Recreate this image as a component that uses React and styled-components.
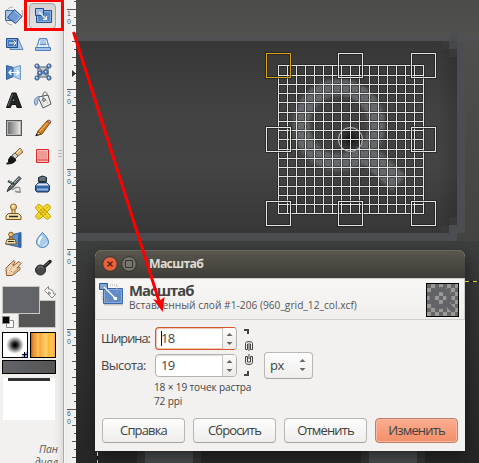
import React from 'react';
import styled, { createGlobalStyle, css } from 'styled-components';

const GlobalStyle = createGlobalStyle`
  * { box-sizing: border-box; }
  body { margin: 0; overflow: hidden; font-family: "Open Sans", "Noto Sans", sans-serif; color: #444; }
`;

const Screen = styled.div`
  position: relative;
  display: flex;
  width: 479px;
  height: 463px;
  overflow: hidden;
  background: #3a3a3a;
`;

/* ---------- toolbox ---------- */
const Toolbox = styled.aside`
  display: flex;
  flex-direction: column;
  flex: none;
  width: 65px;
  height: 463px;
  background: #f2f1f0;
  border-right: 1px solid #f6f5f4;
  box-shadow: inset -1px 0 #aaa9a6, inset -9px 0 9px -7px #cfcecb;
`;
const ToolGrid = styled.div`
  display: grid;
  flex: none;
  grid-template-columns: 29px 29px;
  grid-auto-rows: 28px;
  padding-top: 2px;
`;
const Tool = styled.div`
  display: flex;
  align-items: center;
  justify-content: center;
  width: 27px;
  height: 26px;
  margin: 1px 1px 1px 0;
  border: 1px solid ${(p) => (p.$active ? '#a6a5a2' : 'transparent')};
  border-radius: 4px;
  background: ${(p) => (p.$active ? 'linear-gradient(#d3d2d0, #e4e3e1)' : 'none')};
`;
const ColorArea = styled.div`
  display: grid;
  flex: none;
  grid-template-columns: 16px 22px 16px;
  grid-template-rows: 14px 14px 14px;
  width: 54px;
  margin: 4px 0 4px 2px;
`;
const Swatch = styled.div`
  border: 1px solid #c8c8c2;
  ${(p) => p.$front
    ? css`grid-area: 1 / 1 / 3 / 3; background: #626468; z-index: 1;`
    : css`grid-area: 2 / 2 / 4 / 4; background: #555;`}
`;
const SwapSlot = styled.div`
  grid-area: 1 / 3;
  padding-left: 4px;
`;
const DefaultsSlot = styled.div`
  grid-area: 3 / 1;
  padding-top: 2px;
`;
const PreviewRow = styled.div`
  display: flex;
  flex: none;
  gap: 2px;
  margin-left: 2px;
`;
const Preview = styled.div`
  width: 26px;
  height: 26px;
  border: 1px solid #000;
  background: ${(p) => p.$fill};
`;
const GradientPreview = styled.div`
  flex: none;
  width: 54px;
  height: 14px;
  margin: 2px 0 4px 2px;
  border: 1px solid #000;
  background: linear-gradient(90deg, #626468, #555);
`;
const ImagePreview = styled.div`
  flex: none;
  width: 52px;
  height: 42px;
  margin-left: 3px;
  padding: 0 5px;
  background: #fff;
`;
const ImageStrip = styled.div`
  height: 3px;
  background: #333;
`;
const DockHint = styled.div`
  flex: none;
  width: 58px;
  margin-top: 23px;
  text-align: right;
  font-size: 10.4px;
  line-height: 13px;
  font-style: italic;
  color: #555;
`;
const Art = styled.svg`
  display: block;
  flex: none;
  overflow: visible;
`;

const B = '#3a69a8';
const icons = {
  rotate: <>
    <path d="M1 5q2-5 7-5M17 3q2 4-1 8M1 14q2 4 6 4" fill="none" stroke="#a9a9a7" />
    <path d="M.5 3.500h10v10H.5z" fill="#a7c3e6" stroke={B} />
    <path d="M9.500 2.500l7.500 7-6.500 7-8-6z" fill="#6f9ad2" stroke="#244f8c" />
    <path d="M9.500 4l6 5.500-5 5.500" fill="none" stroke="#b9d0ed" />
  </>,
  scale: <>
    <path d="M2.500 3.500h15v12h-15z" fill="#5a89c8" stroke="#244f8c" />
    <path d="M3.500 4.500h13v10h-13z" fill="none" stroke="#91b3df" />
    <path d="M1.500 1.500h8v7h-8z" fill="#9fbee5" stroke="#244f8c" />
    <path d="M5 5l7 7m-3 .5h3.500V9" fill="none" stroke="#f4f8ff" strokeWidth="1.200" />
  </>,
  shear: <>
    <path d="M5 3.500h8l5 11H5z" fill="#a9c7ea" stroke="#5f86b8" />
    <path d="M1.500 3.500h11v9h-11z" fill="#4477bb" stroke="#244f8c" />
    <path d="M2.500 4.500h9v7h-9z" fill="none" stroke="#7fa6d7" />
    <path d="M4 8h7M8.500 5.500L11 8l-2.500 2.500" fill="none" stroke="#fff" />
  </>,
  perspective: <>
    <path d="M5.500 3.500h7l3.500 11H2z" fill="#e0edfc" stroke="#5f8fc8" />
    <path d="M5.500 3.500h7l1.500 6H4z" fill="#a9c8ec" stroke="#5888c1" />
    <path d="M6 5.500l-2 8M12 5.500l2 8" stroke="#fff" />
    <path d="M1.500 12.500h15v3h-15z" fill="#a3c1e6" stroke="#4f7fbd" />
  </>,
  flip: <>
    <path d="M1.500 2.500l7 2v9l-7 3z" fill="#4a7cbc" stroke="#2d609e" />
    <path d="M8.500 4.500l7-2v14l-7-3z" fill="#b4cfee" stroke="#6d99cb" />
    <path d="M4 9.500h9.500M6.500 7L4 9.500 6.500 12M11.500 7L14 9.500 11.500 12" fill="none" stroke="#fff" strokeWidth="1.200" />
  </>,
  cage: <>
    <path d="M4 4h10v10H4zM4 4l10 10M14 4L4 14" fill="#c7cdd4" stroke="#7d8997" strokeWidth="1.500" />
    {[[3, 3], [15, 3], [6, 10], [12, 9], [3, 15], [15, 15]].map(([x, y]) => <g key={`${x}-${y}`}>
      <circle cx={x} cy={y} r="2.100" fill="#7da3d3" stroke="#244f8c" /><circle cx={x - .5} cy={y - .5} r=".7" fill="#e5f0fd" />
    </g>)}
  </>,
  type: <>
    <path d="M1.500 16.500L7 2h4l5.500 14.500h-4.500l-1-3H6.500l-1 3zM7.500 10.500h2.500L8.800 6z" fill="#262827" stroke="#111" strokeLinejoin="round" />
    <path d="M3 15L7.500 3" stroke="#777" strokeWidth=".8" />
  </>,
  bucket: <>
    <path d="M4 6l10-2 3 9-8 4z" fill="#efefed" stroke="#555753" />
    <path d="M7 9l3 5M11 7l3 6" stroke="#c5c5c0" />
    <path d="M9 9V3q1.500-4 4-.5V5" fill="none" stroke="#666" />
    <circle cx="10" cy="9" r="1.300" fill="#fff" stroke="#555" />
    <path d="M6 5.500Q-.5 6 .5 12q1 5 3 0l.5-4z" fill="#a7c8ec" stroke="#6f8bad" />
  </>,
  pencil: <>
    <path d="M4 12L13 2l3 2-8 11-5 1.500z" fill="#d47d21" stroke="#85500d" />
    <path d="M5.500 12.500L13.500 4" stroke="#ffc477" /><path d="M2.500 16.500l1.200-4 3.300 2.500z" fill="#ead2a6" stroke="#6d4919" />
    <path d="M13 2l2-1 2 1.500-1 2z" fill="#e3928a" stroke="#805246" /><path d="M2 17l1-2" stroke="#111" strokeWidth="1.500" />
  </>,
  brush: <>
    <path d="M10 6l5-5 3 4-5 4z" fill="#e9bd86" stroke="#8b6236" /><path d="M12 6l3.500-3.500" stroke="#fff0cb" />
    <path d="M7 8l3-2 3 3-3 3z" fill="#d2d2d0" stroke="#5f605e" />
    <path d="M6 9l5 4q-2 4-9.500 4 3-2 2-4.500z" fill="#171918" stroke="#111" />
  </>,
  eraser: <>
    <path d="M2.500 2.500h12v13h-12z" fill="#ef9b97" stroke="#df2828" /><path d="M3.500 3.500h10v11h-10z" fill="none" stroke="#f6c1be" /><path d="M3 13h11" stroke="#e34a49" />
  </>,
  airbrush: <>
    <path d="M7 15q7-5 8-1t-5 2q2 2 6 1" fill="none" stroke="#999" strokeWidth="1.500" />
    <path d="M4 12L14 1.500l2 2-9 10-5 3z" fill="#626b6c" stroke="#303738" /><path d="M6 11l8-8" stroke="#b9c2c3" />
    <path d="M3 6l6 3" stroke="#343a3b" strokeWidth="2.500" /><path d="M4 6l4 2" stroke="#91999a" />
  </>,
  ink: <>
    <path d="M4.500 7.500h8l3 3v5l-1.500 1.500H3l-1.500-1.500v-5z" fill="#3465a4" stroke="#23364c" />
    <path d="M4 8.500h9l2 2H2z" fill="#dfe8f1" /><path d="M3 14.500h11" stroke="#8eb5e5" strokeWidth="2" />
    <path d="M4.500 2.500q4-3 8 0v4h-8z" fill="#49545c" stroke="#202a32" /><path d="M5.500 3h6M5.500 5h6" stroke="#82909b" />
  </>,
  clone: <>
    <path d="M8.500 7v5" stroke="#8a5f20" strokeWidth="4" /><path d="M8.500 7v5" stroke="#f6e0aa" strokeWidth="2" />
    <circle cx="8.500" cy="4" r="3" fill="#edc778" stroke="#8a5f20" /><circle cx="8" cy="3" r="1.200" fill="#fff4ce" />
    <path d="M3.500 10.500h10l2.500 2.500v3.500H1V13z" fill="#f0e0b5" stroke="#825615" /><path d="M4 13.500h9" stroke="#312817" strokeWidth="1.500" />
  </>,
  heal: <>
    <path d="M3 2.500q2-2 3.500-.5L9 4.500 11.500 2q2-1.500 3.500 0l1 1.500q1 1.500-.5 3L13 9l2.500 2.500q1.500 1.500.5 3l-1 1q-1.500 1.500-3.500 0L9 13l-2.500 2.500q-2 1.500-3.500 0l-1-1q-1-1.500.5-3L5 9 2.500 6.500Q1 5 2 3.500z" fill="#f4d82f" stroke="#c4a000" />
    <path d="M4 4l10 10M14 4L4 14M6 9l3 3M9 6l3 3M7 7l4 4M11 7l-4 4" stroke="#a98e00" strokeDasharray="1 1.500" />
    <path d="M9 5l4 4-4 4-4-4z" fill="none" stroke="#d1b100" />
  </>,
  perspClone: <>
    <path d="M6 4l10-2.500v15L1 13z" fill="#5f90cf" stroke="#315f99" /><path d="M13 3v13l3 .500v-15z" fill="#3465a4" />
    <circle cx="6" cy="3.500" r="2.300" fill="#edc778" stroke="#825615" /><path d="M5 6h2v3H5z" fill="#f0db9f" stroke="#825615" />
    <path d="M2 8.500h8l1.500 4.500H.5z" fill="#f0e0b5" stroke="#825615" /><path d="M3 10.500h6" stroke="#302614" />
  </>,
  blur: <>
    <path d="M8.500 1.500q6 6 6 9.500a6 5.500 0 01-12 0q0-3.500 6-9.500z" fill="#a9cbed" stroke="#4b82bb" /><path d="M8 5.500q-4 4-3 7.500" fill="none" stroke="#f5fbff" strokeWidth="2" /><path d="M9 15q3.500-1 4-4" fill="none" stroke="#dceaf8" />
  </>,
  smudge: <>
    <path d="M1.500 16.500L1 9l4-4 4-3.500 1 1-2 4.500 6-4.500 2 2-4 4.500 3-.5v2l-5 4-3 2z" fill="#f2cda7" stroke="#8f5c35" />
    <path d="M4 12l4-7M6 13l7-7M8 14l5-4" stroke="#a77145" strokeWidth=".7" /><path d="M3 13l4-7M7 12l6-6" stroke="#fff0df" />
  </>,
  dodge: <>
    <path d="M10 8l6-5.500" stroke="#242726" strokeWidth="3.500" strokeLinecap="round" /><circle cx="6.500" cy="11" r="5" fill="#444847" stroke="#242726" /><path d="M3.500 9.500q3-3.500 6-.5" fill="none" stroke="#7d8280" /><path d="M11 7l4-4" stroke="#777" strokeWidth=".8" />
  </>,
};
const toolOrder = ['rotate', 'scale', 'shear', 'perspective', 'flip', 'cage', 'type', 'bucket', 'gradient', 'pencil', 'brush', 'eraser', 'airbrush', 'ink', 'clone', 'heal', 'perspClone', 'blur', 'smudge', 'dodge'];
const GradientIcon = styled.div`
  width: 16px;
  height: 16px;
  border: 1px solid #555;
  box-shadow: inset 0 0 0 1px #bbb;
  background: linear-gradient(90deg, #666, #eee);
`;

/* ---------- ruler ---------- */
const Ruler = styled.div`
  flex: none;
  width: 11px;
  height: 463px;
  overflow: hidden;
  background: linear-gradient(90deg, #eeeeec, #f4f3f2);
`;
const RULER_LABELS = [[9, '1', '0'], [89, '2', '0'], [169, '3', '0'], [249, '4', '0'], [329, '5', '0'], [409, '6', '0']];
function RulerDrawing() {
  const ticks = [];
  for (let i = -1; i < 58; i += 1) {
    const long = ((i % 10) + 10) % 10 === 0;
    const y = 9 + i * 8;
    ticks.push(<path key={i} d={`M${long ? 2 : i % 2 ? 9 : 7} ${y + 0.5}H11`} stroke="#555" />);
  }
  return (
    <Art width="11" height="463">
      {ticks}
      {RULER_LABELS.map(([y, a, b]) => (
        <g key={y} fontFamily="Liberation Sans" fontSize="6.8" fill="#3f5878">
          <text x="2" y={y + 7}>{a}</text><text x="2" y={y + 14.500}>{b}</text>
        </g>
      ))}
      <path d="M7 70l4 3.500-4 3.500z" fill="#333" />
    </Art>
  );
}

/* ---------- canvas ---------- */
const Canvas = styled.main`
  flex: 1;
  height: 463px;
  background: #333;
`;
const XS = [278, 287, 296, 305, 314, 323, 332, 341, 350, 359, 369, 378, 387, 396, 405, 414, 423];
const YS = [65, 75, 84, 93, 102, 112, 121, 130, 139, 149, 158, 167, 176, 186, 195, 204, 213];
const gridPath = XS.map((x) => `M${x + 0.5} 65V214`).join('') + YS.map((y) => `M278 ${y + 0.5}H424`).join('');
const HANDLES = [[338, 53], [411, 53], [266, 127], [411, 127], [266, 201], [338, 201], [411, 201]];
function Handle({ x, y, color = '#e4e6e3' }) {
  return (
    <g fill="none">
      <rect x={x + 0.5} y={y + 0.5} width="24" height="24" stroke="#111" strokeOpacity=".5" strokeWidth="3" />
      <rect x={x + 0.5} y={y + 0.5} width="24" height="24" stroke={color} />
    </g>
  );
}
function Artwork() {
  return (
    <Art width="403" height="463" viewBox="76 0 403 463">
      <defs>
        <linearGradient id="top" x2="0" y2="1"><stop stopColor="#4b4c4a" /><stop offset=".75" stopColor="#50504f" /><stop offset="1" stopColor="#4f5053" /></linearGradient>
        <linearGradient id="panel" x2="0" y2="1"><stop stopColor="#373737" /><stop offset=".35" stopColor="#424242" /><stop offset=".65" stopColor="#444" /><stop offset="1" stopColor="#373737" /></linearGradient>
        <linearGradient id="side" x2="0" y2="1"><stop stopColor="#4f4f4e" /><stop offset="1" stopColor="#434342" /></linearGradient>
        <linearGradient id="low" x2="0" y2="1"><stop stopColor="#3d3e3e" /><stop offset=".3" stopColor="#333" /><stop offset="1" stopColor="#262626" /></linearGradient>
        <linearGradient id="edge"><stop stopColor="#000" stopOpacity="0" /><stop offset="1" stopColor="#000" stopOpacity=".16" /></linearGradient>
        <radialGradient id="pivot"><stop stopColor="#000" stopOpacity=".75" /><stop offset=".4" stopColor="#000" stopOpacity=".45" /><stop offset="1" stopColor="#000" stopOpacity=".05" /></radialGradient>
        <filter id="soft"><feGaussianBlur stdDeviation="1.400" /></filter>
        <filter id="shade" x="-20%" y="-20%" width="140%" height="150%"><feGaussianBlur stdDeviation="8" /></filter>
      </defs>
      <rect x="76" width="403" height="41" fill="url(#top)" />
      <rect x="457" y="41" width="22" height="200" fill="url(#side)" />
      <rect x="76" y="41" width="381" height="192" fill="url(#panel)" />
      <rect x="437" y="41" width="20" height="192" fill="url(#edge)" />
      <path d="M76 233H449V225H457V41H449V33H457V41H465V233H457V241H76z" fill="#4c4d50" />
      <path d="M449 41h8v8h-8z" fill="#47484b" />
      <path d="M441 41h8v8h-8zM449 49h8v8h-8zM441 225h8v8h-8zM449 217h8v8h-8z" fill="#393939" />
      <rect x="76" y="241" width="403" height="222" fill="url(#low)" />
      <path d="M145 450h48v13h-48zM369 450h48v13h-48z" fill="#46474a" />
      <path d="M137 450h8v13h-8zM193 450h8v13h-8zM361 450h8v13h-8zM417 450h8v13h-8z" fill="#303132" />
      <rect x="97" y="258" width="368" height="196" fill="#000" opacity=".5" filter="url(#shade)" />
      <path d="M465 281.500h14M97.500 451v12" stroke="#111" />
      <path d="M465 281.500h14" stroke="#e2d31d" strokeDasharray="4 4" />
      <path d="M97.500 452v12" stroke="#e2d31d" strokeDasharray="4 4" />
      <g fill="none" stroke="#66686c" filter="url(#soft)">
        <circle cx="339" cy="125" r="37.500" strokeWidth="16" />
        <path d="M369 156l30 27" strokeWidth="20" />
      </g>
      <path d={gridPath} stroke="#111" strokeOpacity=".4" strokeWidth="3" />
      <circle cx="350.500" cy="139.500" r="12" fill="url(#pivot)" />
      <path d={gridPath} stroke="#e1e4e0" />
      <circle cx="350.500" cy="139.500" r="12" fill="none" stroke="#c9ccc9" />
      {HANDLES.map(([x, y]) => <Handle key={`${x}-${y}`} x={x} y={y} />)}
      <Handle x={266} y={53} color="#d8a61e" />
    </Art>
  );
}

/* ---------- dialog ---------- */
const Dialog = styled.section`
  position: absolute;
  left: 95px;
  top: 250px;
  width: 370px;
  height: 201px;
  border-radius: 7px 7px 0 0;
  overflow: hidden;
  background: #f2f1f0;
`;
const TitleBar = styled.header`
  display: flex;
  align-items: center;
  gap: 3px;
  height: 28px;
  padding-left: 7px;
  background: linear-gradient(#59574e, #3d3c37);
  box-shadow: inset 0 1px #6a685f;
`;
const Title = styled.div`
  margin-left: 9px;
  font: 700 12.3px/28px "Open Sans", sans-serif;
  letter-spacing: -0.7px;
  color: #dfdbd2;
  white-space: nowrap;
`;
const Header = styled.div`
  display: flex;
  height: 42px;
  padding: 4px 5px 0 3px;
  border: 1px solid #cfcdca;
  border-left-color: #e0dfdd;
  background: linear-gradient(#f7f6f5, #f0efee);
`;
const Heading = styled.div`
  flex: 1;
  padding-left: 4px;
  white-space: nowrap;
`;
const HeadingTitle = styled.div`
  font-size: 14.8px;
  line-height: 15px;
  font-weight: 700;
  letter-spacing: -0.95px;
`;
const HeadingSub = styled.div`
  font-size: 10.2px;
  line-height: 15px;
  color: #555;
`;
const Form = styled.div`
  display: grid;
  grid-template-columns: 54px 82px 27px 49px;
  grid-template-rows: 23px 23px;
  row-gap: 4px;
  padding: 7px 0 0 6px;
`;
const Label = styled.label`
  grid-column: 1;
  font-size: 12.8px;
  letter-spacing: ${(p) => p.$tracking};
  line-height: 23px;
  white-space: nowrap;
`;
const SpinBox = styled.div`
  grid-column: 2;
  display: flex;
  border: 1px solid ${(p) => (p.$focused ? '#d5562c' : '#b5b2ae')};
  border-right-color: #b5b2ae;
  border-radius: 4px;
  overflow: hidden;
  background: #fff;
  box-shadow: ${(p) => (p.$focused ? 'inset 0 0 0 1px #f5c5b4' : 'inset 0 1px 1px #ddd')};
`;
const SpinValue = styled.div`
  flex: 1;
  padding-left: 5px;
  font-size: 13px;
  letter-spacing: -0.7px;
  line-height: 21px;
`;
const Caret = styled.span`
  display: inline-block;
  width: 1px;
  height: 15px;
  margin-right: -1px;
  vertical-align: -3px;
  background: #111;
`;
const Arrows = styled.div`
  display: flex;
  align-items: center;
  justify-content: center;
  width: 14px;
  border-left: 1px solid #c7c4c1;
  background: linear-gradient(#fbfbfa, #ecebea);
`;
const ChainSlot = styled.div`
  grid-area: 1 / 3 / 3 / 4;
  padding-left: 7px;
`;
const raised = css`
  border: 1px solid #b9b6b3;
  border-bottom-color: #a4a19e;
  border-radius: 4px;
  background: linear-gradient(#fdfdfd, #efeeed);
`;
const Unit = styled.div`
  ${raised}
  grid-area: 2 / 4;
  display: flex;
  align-items: center;
  justify-content: space-between;
  height: 27px;
  margin-top: -2px;
  padding: 0 6px 1px 5px;
  font-size: 13px;
  letter-spacing: -0.5px;
`;
const Note = styled.div`
  padding: 3px 0 0 59px;
  font-size: 10.1px;
  letter-spacing: -0.15px;
  line-height: 14px;
`;
const Buttons = styled.footer`
  display: flex;
  gap: 8px;
  padding: 10px 0 0 7px;
`;
const Button = styled.button`
  ${raised}
  width: 83px;
  height: 25px;
  padding: 0 0 1px;
  font: 13px "Open Sans", sans-serif;
  letter-spacing: -0.85px;
  color: #404040;
  ${(p) => p.$primary && css`
    border-color: #bb7e67;
    background: linear-gradient(#fbae91, #f28e68);
    box-shadow: inset 0 0 0 1px #fbb89e;
  `}
`;
const Overlay = styled.svg`
  position: absolute;
  inset: 0;
  pointer-events: none;
`;

function Stepper({ height = 14 }) {
  return (
    <Art width="7" height={height}>
      <path d="M.5 4L3.500 1l3 3z" fill="#666" />
      <path d={`M.5 ${height - 4}l3 3 3-3z`} fill="#666" />
    </Art>
  );
}
function WindowButton({ close }) {
  return (
    <Art width="16" height="16">
      <circle cx="8" cy="8" r="7.300" fill={close ? '#e9603a' : '#77756d'} stroke="#34332e" />
      {close
        ? <path d="M5.500 5.500l5 5m0-5l-5 5" stroke="#4b2118" strokeWidth="1.300" />
        : <path d="M4.500 4.500h7v7h-7z" fill="none" stroke="#34332e" />}
    </Art>
  );
}
function ScaleGlyph() {
  return (
    <Art width="26" height="26">
      <path d="M5 21.500h19" stroke="#c5c4c3" strokeWidth="2" />
      <path d="M4.500 5.500h19v15h-19z" fill="#5f8bc8" stroke="#3a66a2" />
      <path d="M5.500 6.500h17v13h-17z" fill="none" stroke="#86aadb" />
      <path d="M.5.500h8v6h-8z" fill="#7fa5d8" stroke="#2c5791" />
      <path d="M3 9v8m0 0h8M11 2h7v8" fill="none" stroke="#aaa" strokeDasharray="1 1" />
      <path d="M5 4l11 11" stroke="#fff" strokeWidth="1.200" /><path d="M14 14h4v3h-3z" fill="#fff" />
    </Art>
  );
}
function LayerThumb() {
  const cells = [];
  for (let y = 0; y < 8; y += 1) for (let x = 0; x < 8; x += 1) if ((x + y) % 2) cells.push(<rect key={`${x}${y}`} x={1 + x * 4} y={1 + y * 4} width={x === 7 ? 3 : 4} height="4" fill="#999" />);
  return (
    <Art width="33" height="34">
      <rect width="33" height="34" fill="#000" /><rect x="1" y="1" width="31" height="32" fill="#666" />{cells}
      <circle cx="14.500" cy="15" r="8.500" fill="none" stroke="#626468" strokeWidth="5" /><path d="M20 20l8 8" stroke="#626468" strokeWidth="5" />
    </Art>
  );
}
function Chain() {
  return (
    <Art width="14" height="50" fill="none" stroke="#444">
      <path d="M0 3h4v4" strokeWidth="2" /><path d="M0 48h4v-4" strokeWidth="2" />
      <path d="M3.500 22.500h-2v-6q0-2 3.500-2t3.500 2v6h-2v-5.500h-3v5.500M5 18v6M5 27v5M1.500 29.500h2v5.500h3v-5.500h2v6q0 2-3.500 2t-3.500-2z" />
    </Art>
  );
}

export default function App() {
  return (
    <Screen>
      <GlobalStyle />
      <Toolbox>
        <ToolGrid>
          {toolOrder.map((name) => (
            <Tool key={name} $active={name === 'scale'}>
              {name === 'gradient' ? <GradientIcon /> : <Art width="18" height="18">{icons[name]}</Art>}
            </Tool>
          ))}
        </ToolGrid>
        <ColorArea>
          <Swatch $front /><Swatch />
          <SwapSlot><Art width="13" height="13"><path d="M.5 4.500l4-4v2.500q5 0 5 5H12l-4 4-4-4h2.500q0-2-2-2v2.500z" fill="#fafaf8" stroke="#888" /></Art></SwapSlot>
          <DefaultsSlot><Art width="13" height="13"><path d="M4.500 4.500h7v7h-7z" fill="#fff" stroke="#888" /><path d="M.5.500h7v7h-7z" fill="#000" stroke="#888" /></Art></DefaultsSlot>
        </ColorArea>
        <PreviewRow>
          <Preview $fill="radial-gradient(circle, #000 5%, #333 18%, #999 34%, #fff 52%)">
            <Art width="24" height="24"><path d="M24 18v6h-6z" fill="#8cabf7" /><path d="M19 21.500h5M21.500 19v5" stroke="#000" /></Art>
          </Preview>
          <Preview $fill="linear-gradient(90deg, #b85718, #eb8d31 2px, #f7a63c 5px, #ffc85b 7px, #f6a646 9px, #ffbd50 12px, #ffd16b 15px, #ffb531 18px, #ffc75f 21px, #f5a543)" />
        </PreviewRow>
        <GradientPreview />
        <ImagePreview><ImageStrip /></ImagePreview>
        <DockHint>Пан<br />диал</DockHint>
      </Toolbox>
      <Ruler><RulerDrawing /></Ruler>
      <Canvas><Artwork /></Canvas>
      <Dialog>
        <TitleBar><WindowButton close /><WindowButton /><Title>Масштаб</Title></TitleBar>
        <Header>
          <ScaleGlyph />
          <Heading>
            <HeadingTitle>Масштаб</HeadingTitle>
            <HeadingSub>Вставленный слой #1-206 (960_grid_12_col.xcf)</HeadingSub>
          </Heading>
          <LayerThumb />
        </Header>
        <Form>
          <Label $tracking="-1px">Ширина:</Label>
          <SpinBox $focused><SpinValue><Caret />18</SpinValue><Arrows><Stepper /></Arrows></SpinBox>
          <ChainSlot><Chain /></ChainSlot>
          <Label $tracking="-0.5px">Высота:</Label>
          <SpinBox><SpinValue>19</SpinValue><Arrows><Stepper /></Arrows></SpinBox>
          <Unit>px<Stepper /></Unit>
        </Form>
        <Note>18 × 19 точек растра<br />72 ppi</Note>
        <Buttons>
          <Button>Справка</Button><Button>Сбросить</Button><Button>Отменить</Button><Button $primary>Изменить</Button>
        </Buttons>
      </Dialog>
      <Overlay width="479" height="463">
        <path d="M58 150.500h4M58 153.500h4M58 156.500h4" stroke="#bbb" />
        <rect x="25.500" y=".5" width="37" height="29" fill="none" stroke="#f00" strokeWidth="3" />
        <path d="M73.500 32L159 301" stroke="#f00" strokeWidth="3" />
        <path d="M162.700 312l-9.700-13 6 2 5.500-4z" fill="#f00" />
      </Overlay>
    </Screen>
  );
}
